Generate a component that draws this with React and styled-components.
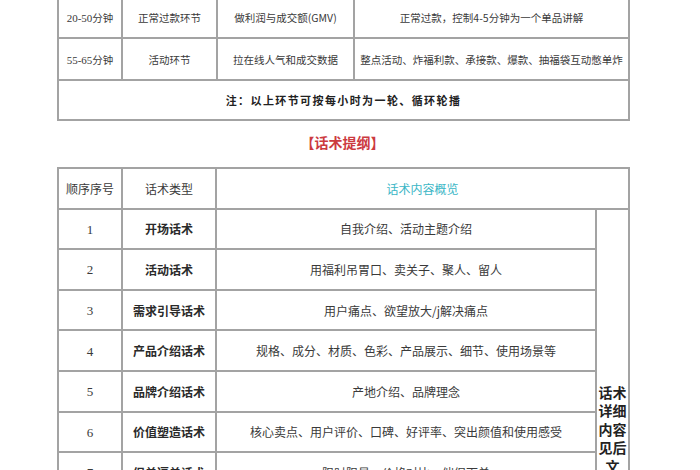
import React from "react";
import styled, { createGlobalStyle } from "styled-components";

const GlobalStyle = createGlobalStyle`
  html, body {
    margin: 0;
    padding: 0;
    background: #ffffff;
    overflow: hidden;
  }
  body {
    font-family: "Noto Sans CJK SC", "Noto Sans", sans-serif;
    color: #333;
  }
`;

const Page = styled.div`
  width: 700px;
  height: 470px;
  overflow: hidden;
  padding-left: 57px;
  box-sizing: border-box;
`;

const Table = styled.table`
  width: 571px;
  border-collapse: collapse;
  table-layout: fixed;
  margin-top: ${(p) => p.$top || 0}px;
`;

const Cell = styled.td`
  border: 2px solid #a3a3a3;
  height: ${(p) => p.$h || 39}px;
  padding: 0;
  text-align: center;
  vertical-align: middle;
  font-size: ${(p) => p.$size || 12}px;
  font-weight: ${(p) => (p.$bold ? 700 : 400)};
  color: ${(p) => p.$color || "#3a3a3a"};
  letter-spacing: ${(p) => p.$spacing || 0}px;
  white-space: nowrap;
  overflow: hidden;
`;

const Num = styled.span`
  font-family: "Liberation Serif", "Noto Sans CJK SC", serif;
  font-size: ${(p) => p.$size || 12}px;
  font-weight: 400;
`;

const SideCell = styled.td`
  border: 2px solid #a3a3a3;
  padding: 173px 1px 0;
  vertical-align: top;
  text-align: center;
  font-size: 14px;
  font-weight: 700;
  line-height: 18.6px;
  color: #222;
  white-space: normal;
  word-break: break-all;
`;

const Title = styled.h2`
  margin: 0;
  height: 46px;
  padding-top: 11px;
  box-sizing: border-box;
  width: 571px;
  text-align: center;
  font-size: 14px;
  font-weight: 700;
  color: #cc3b3f;
  line-height: 20px;
`;

const flowRows = [
  ["20-50分钟", "正常过款环节", "做利润与成交额(GMV)", "正常过款，控制4-5分钟为一个单品讲解"],
  ["55-65分钟", "活动环节", "拉在线人气和成交数据", "整点活动、炸福利款、承接款、爆款、抽福袋互动憋单炸"],
];

const scriptRows = [
  ["1", "开场话术", "自我介绍、活动主题介绍"],
  ["2", "活动话术", "用福利吊胃口、卖关子、聚人、留人"],
  ["3", "需求引导话术", "用户痛点、欲望放大/j解决痛点"],
  ["4", "产品介绍话术", "规格、成分、材质、色彩、产品展示、细节、使用场景等"],
  ["5", "品牌介绍话术", "产地介绍、品牌理念"],
  ["6", "价值塑造话术", "核心卖点、用户评价、口碑、好评率、突出颜值和使用感受"],
  ["7", "促单逼单话术", "限时限量、价格对比、催促下单"],
  ["8", "售后保障话术", "七天无理由、运费险、售后服务"],
  ["9", "下播话术", "感谢陪伴、预告下场直播"],
];

const splitNum = (text) => {
  const m = text.match(/^([\d-]+)(.*)$/);
  if (!m) return text;
  return (
    <>
      <Num $size={11}>{m[1]}</Num>
      {m[2]}
    </>
  );
};

export default function App() {
  return (
    <Page>
      <GlobalStyle />
      <Table $top={-5}>
        <colgroup>
          <col style={{ width: 64 }} />
          <col style={{ width: 95 }} />
          <col style={{ width: 137 }} />
          <col style={{ width: 275 }} />
        </colgroup>
        <tbody>
          {flowRows.map((r) => (
            <tr key={r[0]}>
              <Cell $size={10.5} $h={40}>{splitNum(r[0])}</Cell>
              <Cell $size={10.5} $h={40}>{r[1]}</Cell>
              <Cell $size={10.5} $h={40}>{r[2]}</Cell>
              <Cell $size={10.5} $h={40}>{r[3]}</Cell>
            </tr>
          ))}
          <tr>
            <Cell colSpan={4} $size={11} $bold $spacing={1.4} $h={38} $color="#222">
              注：以上环节可按每小时为一轮、循环轮播
            </Cell>
          </tr>
        </tbody>
      </Table>

      <Title>【话术提纲】</Title>

      <Table>
        <colgroup>
          <col style={{ width: 64 }} />
          <col style={{ width: 94 }} />
          <col style={{ width: 380 }} />
          <col style={{ width: 33 }} />
        </colgroup>
        <tbody>
          <tr>
            <Cell $h={38.6}>顺序序号</Cell>
            <Cell $h={38.6}>话术类型</Cell>
            <Cell colSpan={2} $h={38.6} $color="#3bb6c6">话术内容概览</Cell>
          </tr>
          {scriptRows.map((r, i) => (
            <tr key={r[0]}>
              <Cell $h={38.6}>
                <Num $size={13}>{r[0]}</Num>
              </Cell>
              <Cell $h={38.6} $bold $color="#2a2a2a">{r[1]}</Cell>
              <Cell $h={38.6}>{r[2]}</Cell>
              {i === 0 && (
                <SideCell rowSpan={scriptRows.length}>话术详细内容见后文</SideCell>
              )}
            </tr>
          ))}
        </tbody>
      </Table>
    </Page>
  );
}
